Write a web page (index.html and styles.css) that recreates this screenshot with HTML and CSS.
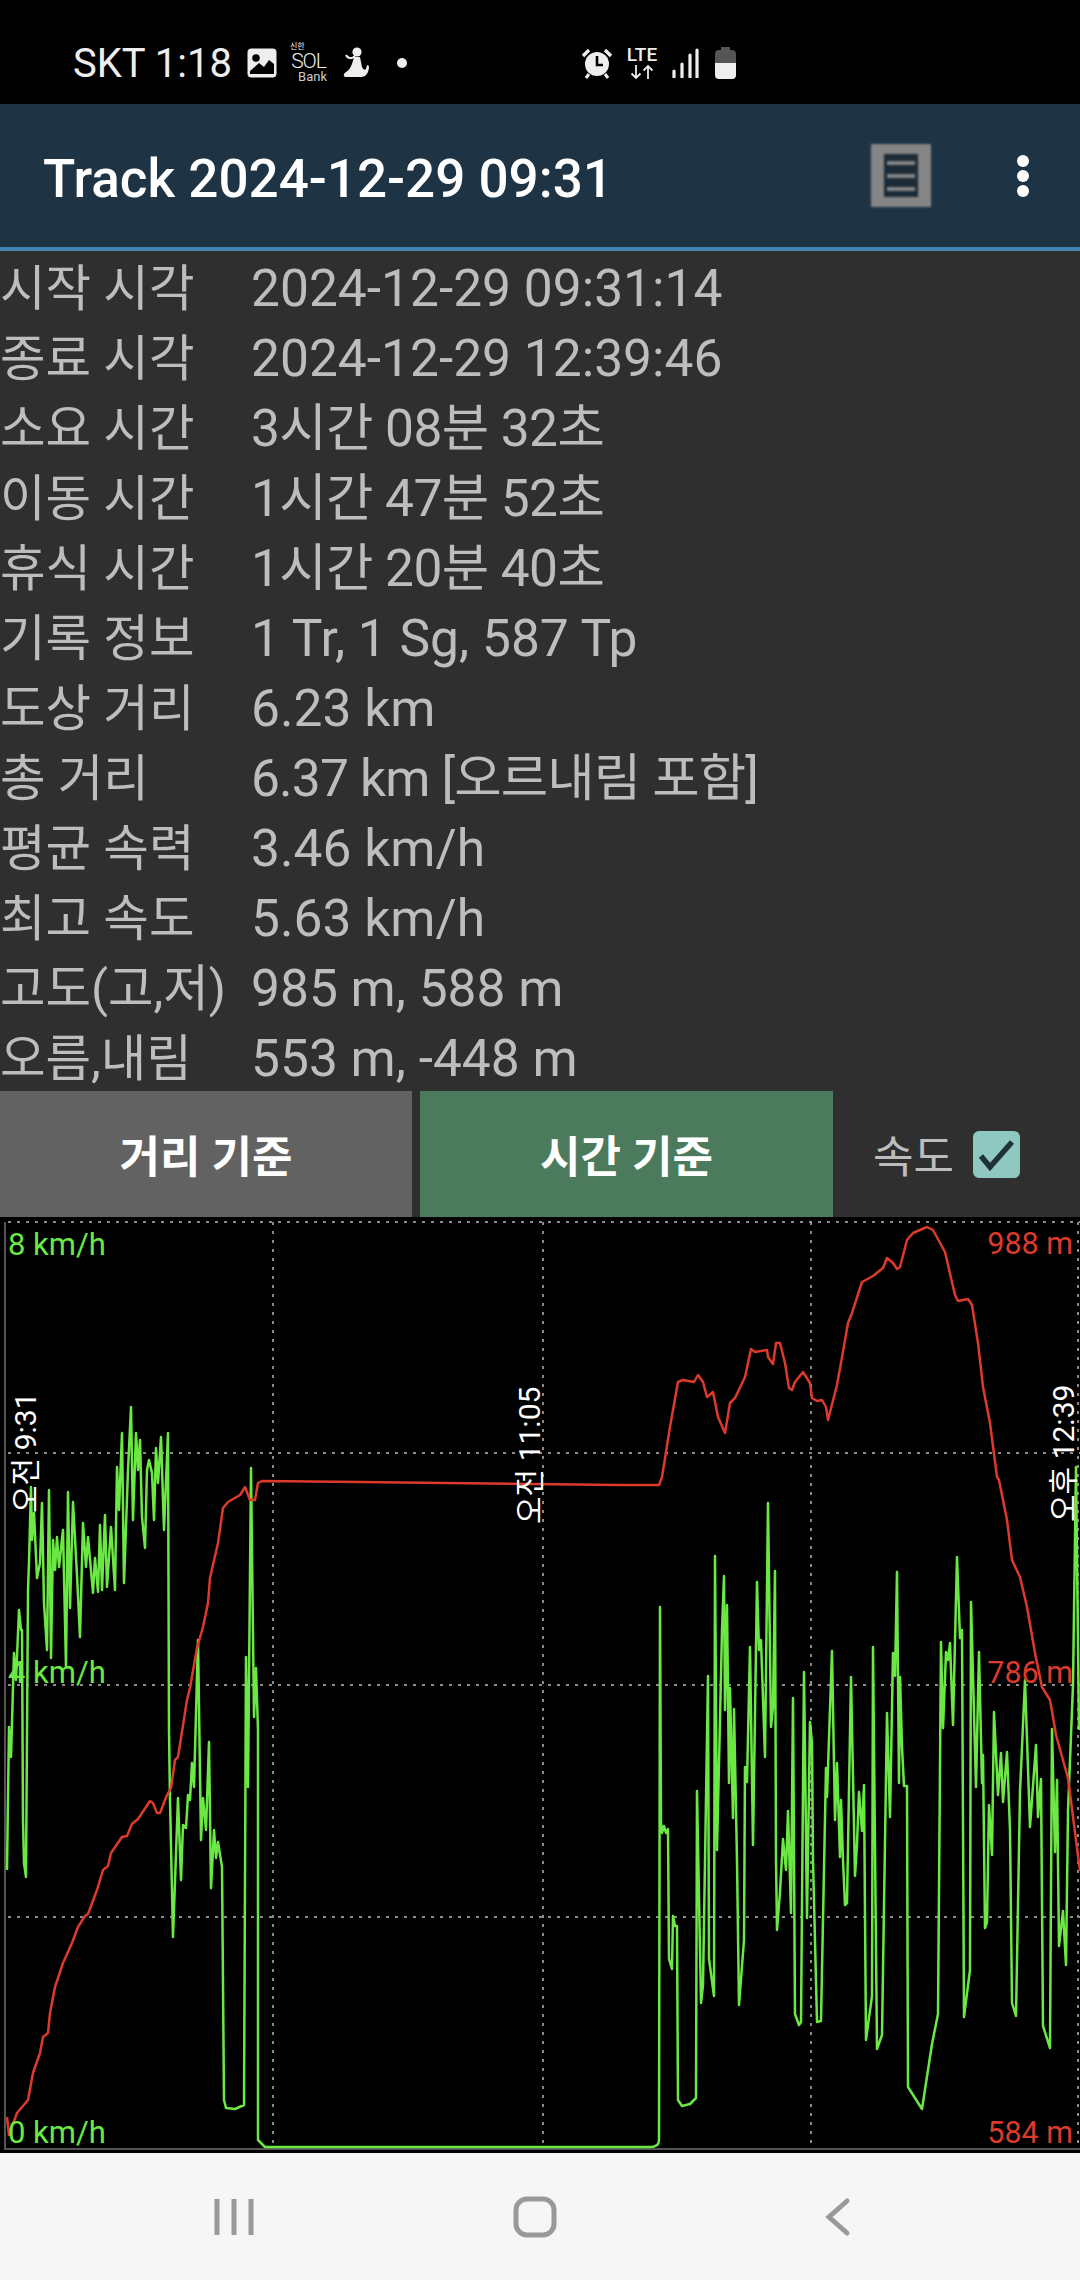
FILE: index.html
```html
<!DOCTYPE html>
<html lang="ko">
<head>
    <meta charset="UTF-8">
    <meta name="viewport" content="width=device-width, initial-scale=1.0">
    <title>Track 2024-12-29 09:31</title>
    <link rel="stylesheet" href="styles.css">
</head>
<body>
    <!-- Status bar -->
    <div class="status-bar">
        <span class="carrier">SKT 1:18</span>
        <svg width="30" height="30" viewBox="0 0 30 30">
            <rect x="0.5" y="0.5" width="29" height="29" rx="4" fill="#eee"/>
            <circle cx="9" cy="10" r="3.8" fill="#000"/>
            <path d="M3 23 L12 15 L17 19 L22 12 L27 16 L27 26 L3 26 Z" fill="#000"/>
        </svg>
        <div class="sol-logo">
            <span class="sol-top">신한</span>
            <span class="sol-mid">SOL</span>
            <span class="sol-bottom">Bank</span>
        </div>
        <svg class="icon-figure" width="27" height="32" viewBox="0 0 27 32">
            <circle cx="14" cy="5" r="4.6" fill="#eee"/>
            <path d="M3 8 C5 12 9 12 12 9" fill="none" stroke="#eee" stroke-width="2"/>
            <path d="M11 10 L17 10 L19 20 C21 24 23 24 24 18 L26 19 C26 27 22 30 18 30 L3 30 C0 30 0 27 3 25 C7 23 9 18 11 10 Z" fill="#eee"/>
        </svg>
        <span class="status-dot"></span>
        <div class="status-right">
            <svg width="32" height="32" viewBox="0 0 32 32">
                <circle cx="16" cy="17" r="12" fill="#eee"/>
                <path d="M16 9 L16 18 L22 18" fill="none" stroke="#000" stroke-width="2.6"/>
                <path d="M2 9 L8 3 M30 9 L24 3" stroke="#eee" stroke-width="3.4"/>
                <path d="M8 27 L5 31 M24 27 L27 31" stroke="#eee" stroke-width="3"/>
            </svg>
            <div class="lte">
                <span>LTE</span>
                <svg width="24" height="14" viewBox="0 0 24 14">
                    <path d="M6 0 V13 M1.5 8.5 L6 13 L10.5 8.5 M18 14 V1 M13.5 5.5 L18 1 L22.5 5.5" fill="none" stroke="#eee" stroke-width="1.8"/>
                </svg>
            </div>
            <svg class="icon-signal" width="28" height="30" viewBox="0 0 28 30">
                <path d="M3 29 V23 M11 29 V16 M19 29 V7 M26 29 V2" stroke="#eee" stroke-width="3.2" stroke-linecap="round"/>
            </svg>
            <svg width="21" height="32" viewBox="0 0 21 32">
                <path d="M6 0 H15 V3 H17 Q21 3 21 7 V16 H0 V7 Q0 3 4 3 H6 Z" fill="#555"/>
                <path d="M0 16 H21 V28 Q21 32 17 32 H4 Q0 32 0 28 Z" fill="#eee"/>
            </svg>
        </div>
    </div>

    <!-- Toolbar -->
    <div class="toolbar">
        <h1>Track 2024-12-29 09:31</h1>
        <div class="list-btn">
            <span></span>
            <span></span>
            <span></span>
        </div>
        <div class="more-btn">
            <i></i>
            <i></i>
            <i></i>
        </div>
    </div>

    <!-- Track details -->
    <div class="details">
        <div class="row"><span class="label">시작 시각</span><span>2024-12-29 09:31:14</span></div>
        <div class="row"><span class="label">종료 시각</span><span>2024-12-29 12:39:46</span></div>
        <div class="row"><span class="label">소요 시간</span><span class="mixed">3시간 08분 32초</span></div>
        <div class="row"><span class="label">이동 시간</span><span class="mixed">1시간 47분 52초</span></div>
        <div class="row"><span class="label">휴식 시간</span><span class="mixed">1시간 20분 40초</span></div>
        <div class="row"><span class="label">기록 정보</span><span>1 Tr, 1 Sg, 587 Tp</span></div>
        <div class="row"><span class="label">도상 거리</span><span>6.23 km</span></div>
        <div class="row"><span class="label">총 거리</span><span class="mixed-long">6.37 km [오르내림 포함]</span></div>
        <div class="row"><span class="label">평균 속력</span><span>3.46 km/h</span></div>
        <div class="row"><span class="label">최고 속도</span><span>5.63 km/h</span></div>
        <div class="row"><span class="label">고도(고,저)</span><span>985 m, 588 m</span></div>
        <div class="row"><span class="label">오름,내림</span><span>553 m, -448 m</span></div>
    </div>

    <!-- Chart mode -->
    <div class="mode-bar">
        <div class="mode-btn">거리 기준</div>
        <div class="mode-btn active">시간 기준</div>
        <div class="speed-check">
            <span>속도</span>
            <svg width="47" height="47" viewBox="0 0 47 47">
                <rect width="47" height="47" rx="6" fill="#8fc7c1"/>
                <path d="M8 25 L17 36 L39 11" fill="none" stroke="#1f3335" stroke-width="5.5"/>
            </svg>
        </div>
    </div>

    <!-- Chart, coordinates are page pixels -->
    <svg class="chart" viewBox="0 1217 1080 936" width="1080" height="936">
        <g class="grid">
            <path d="M8 1222 H1080 M8 1453 H1080 M8 1685 H1080 M8 1917 H1080"/>
            <path d="M273 1222 V2147 M543 1222 V2147 M811 1222 V2147 M1078 1222 V2147"/>
        </g>
        <path class="axis" d="M5 1222 V2149 H1080"/>
        <path class="speed" d="M7 1870 L9 1727 L11 1757 L14 1653 L16 1680 L19 1610 L21 1630 L22 1630 L23 1820 L24 1863 L26 1877 L28 1590 L29 1562 L31 1487 L32 1540 L34 1513 L37 1578 L40 1563 L42 1503 L44 1603 L47 1650 L49 1490 L51 1658 L53 1540 L55 1570 L57 1537 L59 1567 L63 1530 L66 1667 L68 1492 L70 1608 L73 1502 L77 1575 L80 1637 L83 1523 L86 1567 L88 1537 L93 1593 L95 1558 L98 1592 L100 1525 L102 1590 L105 1515 L107 1587 L111 1527 L115 1590 L117 1467 L119 1510 L122 1433 L124 1583 L128 1470 L131 1407 L133 1520 L136 1433 L138 1470 L140 1440 L142 1517 L145 1548 L147 1470 L149 1460 L152 1473 L154 1520 L156 1448 L158 1483 L161 1437 L164 1530 L168 1433 L169 1730 L170 1800 L173 1937 L178 1798 L181 1880 L183 1825 L186 1828 L188 1795 L190 1800 L192 1763 L194 1787 L198 1640 L201 1840 L203 1798 L206 1830 L209 1742 L211 1888 L214 1830 L216 1858 L218 1842 L222 1867 L224 2100 L226 2108 L235 2109 L244 2105 L246 1657 L248 1787 L251 1468 L254 1717 L256 1668 L258 1730 L258 2140 L265 2147 L650 2147 Q659 2147 659 2140 L660 1607 L661 1822 L662 1833 L664 1826 L666 1833 L668 1829 L669 1959 L672 1969 L673 1916 L675 1926 L677 1926 L678 2100 L682 2106 L690 2104 L696 2098 L697 1791 L701 2003 L703 1985 L708 1676 L709 1959 L714 1996 L715 1556 L717 1850 L720 1720 L722 1630 L724 1576 L725 1710 L727 1605 L729 1783 L730 1688 L733 1818 L734 1709 L737 1860 L739 2005 L744 1940 L745 1767 L747 1782 L750 1647 L753 1845 L757 1582 L759 1650 L761 1640 L765 1757 L768 1503 L771 1727 L773 1707 L775 1571 L776 1860 L777 1930 L780 1892 L783 1839 L786 1870 L788 1811 L791 1913 L793 1698 L795 2014 L799 2025 L801 2022 L804 1672 L807 1918 L810 1722 L812 1743 L813 1860 L817 2022 L821 2021 L826 1768 L827 1797 L832 1651 L835 1820 L837 1763 L840 1857 L841 1800 L843 1860 L845 1905 L847 1903 L851 1677 L855 1876 L857 1844 L859 1792 L862 1831 L864 1785 L866 2040 L872 1996 L873 1647 L877 2049 L882 2035 L887 1713 L890 1817 L893 1653 L895 1676 L897 1572 L899 1783 L900 1677 L902 1747 L904 1786 L907 1786 L908 2087 L922 2109 L932 2044 L938 2014 L941 1642 L943 1728 L946 1652 L948 1660 L950 1643 L953 1725 L957 1557 L960 1638 L962 1630 L964 2017 L970 1970 L971 1602 L976 1787 L979 1652 L982 1783 L983 1755 L985 1928 L987 1922 L989 1805 L992 1855 L994 1712 L998 1795 L1001 1753 L1003 1802 L1007 1752 L1010 1830 L1012 2003 L1016 2016 L1020 1792 L1025 1680 L1030 1827 L1036 1745 L1038 1817 L1041 1779 L1043 2026 L1050 2048 L1052 1729 L1055 1852 L1057 1780 L1059 1946 L1063 1911 L1066 1965 L1068 1811 L1073 1685 L1076 1467 L1079 1730"/>
        <path class="altitude" d="M7 2117 L9 2135 L17 2113 L28 2100 L33 2073 L40 2053 L43 2037 L48 2033 L50 2013 L55 1987 L63 1963 L72 1943 L78 1927 L85 1916 L88 1914 L97 1890 L103 1870 L108 1866 L111 1853 L122 1837 L127 1836 L132 1824 L138 1819 L142 1813 L146 1807 L150 1801 L153 1803 L157 1813 L160 1813 L167 1795 L171 1788 L175 1760 L178 1757 L187 1700 L190 1688 L197 1648 L203 1627 L208 1603 L210 1578 L218 1543 L223 1508 L228 1502 L240 1495 L245 1487 L250 1500 L253 1500 L255 1500 L258 1483 L262 1481 L360 1482 L620 1485 L659 1485 L662 1477 L670 1427 L673 1410 L678 1382 L683 1380 L694 1382 L698 1375 L703 1382 L707 1397 L713 1392 L718 1417 L725 1433 L730 1403 L735 1398 L745 1377 L751 1349 L755 1352 L767 1350 L768 1357 L773 1364 L776 1343 L780 1343 L785 1363 L789 1388 L792 1390 L795 1382 L803 1372 L810 1383 L812 1398 L817 1401 L822 1400 L826 1407 L828 1420 L837 1385 L841 1363 L848 1323 L852 1313 L862 1282 L873 1276 L883 1268 L887 1258 L893 1263 L897 1269 L900 1267 L907 1240 L913 1233 L927 1227 L933 1230 L945 1252 L955 1295 L958 1301 L968 1299 L972 1305 L978 1343 L983 1387 L990 1423 L997 1477 L999 1480 L1007 1520 L1012 1560 L1020 1577 L1027 1607 L1035 1653 L1042 1687 L1050 1700 L1053 1717 L1056 1735 L1063 1760 L1068 1778 L1080 1871"/>
        <text class="lbl-speed" x="8" y="1255">8 km/h</text>
        <text class="lbl-speed" x="8" y="1683">4 km/h</text>
        <text class="lbl-speed" x="8" y="2143">0 km/h</text>
        <text class="lbl-alt" x="1073" y="1254">988 m</text>
        <text class="lbl-alt" x="1073" y="1683">786 m</text>
        <text class="lbl-alt" x="1073" y="2143">584 m</text>
        <text class="lbl-time" transform="translate(36 1513) rotate(-90)">오전 9:31</text>
        <text class="lbl-time" transform="translate(540 1524) rotate(-90)">오전 11:05</text>
        <text class="lbl-time" transform="translate(1074 1522) rotate(-90)">오후 12:39</text>
    </svg>

    <!-- Navigation bar -->
    <div class="nav-bar">
        <svg width="40" height="36" viewBox="0 0 40 36">
            <path d="M3 1 V35 M20 1 V35 M37 1 V35" stroke="#999" stroke-width="5" stroke-linecap="round"/>
        </svg>
        <svg class="nav-home" width="44" height="42" viewBox="0 0 44 42">
            <rect x="3" y="3" width="38" height="36" rx="11" fill="none" stroke="#999" stroke-width="5"/>
        </svg>
        <svg class="nav-back" width="26" height="40" viewBox="0 0 26 40">
            <path d="M22 4 L4 20 L22 36" fill="none" stroke="#999" stroke-width="5" stroke-linecap="round"/>
        </svg>
    </div>
</body>
</html>
```

FILE: styles.css
```css
* {
    box-sizing: border-box;
    margin: 0;
    padding: 0;
}

body {
    width: 1080px;
    height: 2280px;
    overflow: hidden;
    background-color: #2f2f2f;
    font-family: Roboto, 'Noto Sans CJK KR', sans-serif;
}

/* Status bar */
.status-bar {
    height: 104px;
    background-color: #000;
    color: #eee;
    display: flex;
    align-items: center;
    padding: 22px 0 0 73px;
}

.carrier {
    font-size: 40px;
    width: 174px;
    white-space: nowrap;
}

.sol-logo {
    width: 37px;
    margin-left: 13px;
    display: flex;
    flex-direction: column;
    align-items: center;
}

.sol-top {
    font-size: 8px;
    line-height: 10px;
    align-self: flex-start;
}

.sol-mid {
    font-size: 21px;
    font-weight: 300;
    line-height: 18px;
    letter-spacing: -1px;
}

.sol-bottom {
    font-size: 13px;
    line-height: 14px;
    align-self: flex-end;
    color: #ccc;
}

.icon-figure {
    margin-left: 16px;
}

.status-dot {
    width: 10px;
    height: 10px;
    border-radius: 50%;
    background-color: #eee;
    margin-left: 27px;
}

.status-right {
    display: flex;
    align-items: center;
    gap: 13px;
    margin-left: 174px;
}

.lte {
    display: flex;
    flex-direction: column;
    align-items: center;
    gap: 3px;
    width: 32px;
    font-size: 19px;
    font-weight: 500;
    line-height: 14px;
}

.icon-signal {
    margin-right: 3px;
}

/* Toolbar */
.toolbar {
    height: 147px;
    background-color: #1e3344;
    border-bottom: 4px solid #3f85b0;
    display: flex;
    align-items: center;
    padding-left: 43px;
}

h1 {
    color: #fff;
    font-size: 53px;
    font-weight: 500;
    flex: 1;
    margin-top: 6px;
}

.list-btn {
    width: 60px;
    height: 63px;
    margin-right: 86px;
    background-color: #1b2a37;
    border-style: solid;
    border-color: #858585;
    border-width: 10px 13px;
    filter: blur(1px);
    display: flex;
    flex-direction: column;
    justify-content: center;
    gap: 9px;
    padding: 0 3px;
}

.list-btn span {
    height: 4px;
    background-color: #858585;
}

.more-btn {
    display: flex;
    flex-direction: column;
    gap: 3px;
    margin-right: 51px;
}

.more-btn i {
    width: 12px;
    height: 12px;
    border-radius: 50%;
    background-color: #fff;
}

/* Track details */
.details {
    height: 840px;
    color: #bdbdbd;
    font-size: 51.5px;
}

.row {
    height: 70px;
    line-height: 70px;
    padding-top: 3px;
    display: flex;
    white-space: nowrap;
}

.label {
    width: 251px;
    font-size: 49.5px;
}

.mixed {
    letter-spacing: -0.6px;
}

.mixed-long {
    letter-spacing: -0.85px;
}

/* Chart mode */
.mode-bar {
    height: 126px;
    display: flex;
}

.mode-btn {
    width: 412px;
    background-color: #626262;
    color: #fff;
    font-size: 44px;
    font-weight: 700;
    display: flex;
    align-items: center;
    justify-content: center;
}

.mode-btn.active {
    width: 413px;
    margin-left: 8px;
    background-color: #4b7a5c;
}

.speed-check {
    display: flex;
    align-items: center;
    gap: 19px;
    margin-left: 40px;
    color: #bdbdbd;
    font-size: 44px;
}

/* Chart */
.chart {
    display: block;
    background-color: #000;
}

.grid path {
    fill: none;
    stroke: #b8b8b8;
    stroke-width: 1.5;
    stroke-dasharray: 3 6;
}

.axis {
    fill: none;
    stroke: #555;
    stroke-width: 2;
}

.speed {
    fill: none;
    stroke: #6ce845;
    stroke-width: 2.5;
    stroke-linejoin: round;
}

.altitude {
    fill: none;
    stroke: #dc3a2b;
    stroke-width: 2.5;
    stroke-linejoin: round;
}

.lbl-speed {
    fill: #6ce845;
    font-size: 31px;
}

.lbl-alt {
    fill: #dc3a2b;
    font-size: 30.5px;
    text-anchor: end;
}

.lbl-time {
    fill: #fff;
    font-size: 30px;
}

/* Navigation bar */
.nav-bar {
    height: 127px;
    background-color: #f6f6f6;
    display: flex;
    align-items: center;
    padding-left: 214px;
}

.nav-home {
    margin-left: 259px;
}

.nav-back {
    margin-left: 268px;
}
```
